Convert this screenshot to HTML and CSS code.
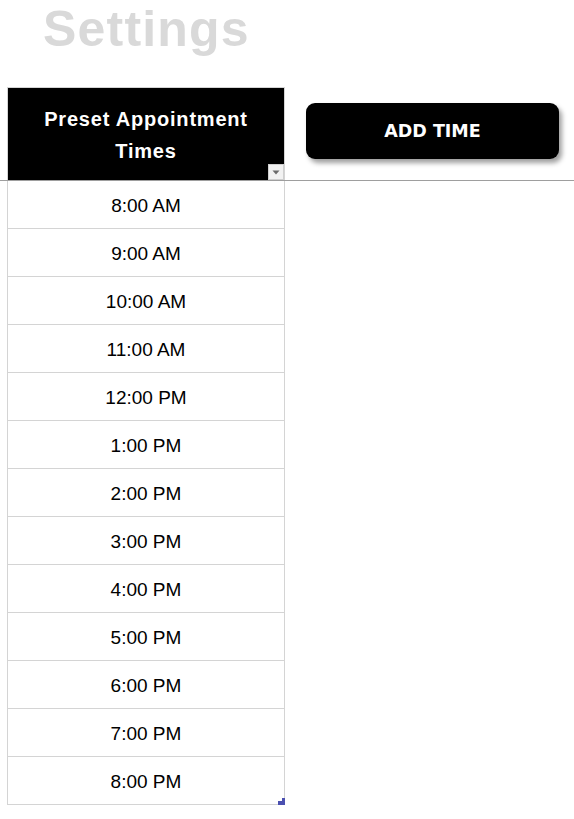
FILE: index.html
```html
<!DOCTYPE html>
<html>
<head>
<meta charset="utf-8">
<link rel="stylesheet" href="styles.css">
</head>
<body>
<div class="title">Settings</div>
<div class="top">
  <div class="head">
    <div class="head-text">Preset Appointment<br>Times</div>
    <div class="filter"><svg width="8" height="5" viewBox="0 0 8 5"><path d="M0.5 0.5 H7.5 L4 4.5 Z" fill="#6b6b6b"/></svg></div>
  </div>
  <div class="btn">ADD TIME</div>
</div>
<div class="freeze"></div>
<div class="table">
  <div class="row">8:00 AM</div>
  <div class="row">9:00 AM</div>
  <div class="row">10:00 AM</div>
  <div class="row">11:00 AM</div>
  <div class="row">12:00 PM</div>
  <div class="row">1:00 PM</div>
  <div class="row">2:00 PM</div>
  <div class="row">3:00 PM</div>
  <div class="row">4:00 PM</div>
  <div class="row">5:00 PM</div>
  <div class="row">6:00 PM</div>
  <div class="row">7:00 PM</div>
  <div class="row">8:00 PM</div>
  <svg class="handle" width="7" height="7" viewBox="0 0 7 7"><path d="M4 0 H7 V7 H0 V3 H4 Z" fill="#4b50b0"/></svg>
</div>
</body>
</html>
```

FILE: styles.css
```css
html, body {
  margin: 0;
  padding: 0;
  background: #ffffff;
}
body {
  font-family: "Liberation Sans", Arial, sans-serif;
  width: 574px;
  height: 819px;
  overflow: hidden;
}
.title {
  height: 87px;
  box-sizing: border-box;
  padding-left: 43px;
  padding-top: 1px;
  font-size: 50px;
  line-height: 56px;
  font-weight: bold;
  letter-spacing: 1.2px;
  color: #d9d9d9;
}
.top {
  display: flex;
  align-items: flex-start;
  height: 93px;
}
.head {
  position: relative;
  margin-left: 7px;
  width: 278px;
  height: 93px;
  box-sizing: border-box;
  border: 1px solid #d4d4d4;
  border-bottom: none;
  background: #000000;
  background-clip: content-box;
  display: flex;
  align-items: center;
  justify-content: center;
}
.head-text {
  color: #ffffff;
  font-weight: bold;
  font-size: 20px;
  letter-spacing: 0.8px;
  line-height: 32px;
  text-align: center;
  padding-top: 2px;
}
.filter {
  position: absolute;
  right: 0;
  bottom: 0;
  width: 16px;
  height: 16px;
  box-sizing: border-box;
  background: #f2f2f2;
  border: 1px solid #cfcfcf;
  display: flex;
  align-items: center;
  justify-content: center;
}
.btn {
  margin-left: 21px;
  margin-top: 16px;
  width: 253px;
  height: 56px;
  background: #000000;
  border-radius: 9px;
  box-shadow: 3px 4px 5px rgba(0, 0, 0, 0.38);
  color: #ffffff;
  font-family: "DejaVu Sans", sans-serif;
  font-weight: bold;
  font-size: 17.5px;
  display: flex;
  align-items: center;
  justify-content: center;
  padding-bottom: 1px;
  box-sizing: border-box;
}
.freeze {
  height: 1px;
  background: #9e9e9e;
}
.table {
  position: relative;
  margin-left: 7px;
  width: 278px;
  box-sizing: border-box;
  border-left: 1px solid #d4d4d4;
  border-right: 1px solid #d4d4d4;
}
.row {
  height: 48px;
  box-sizing: border-box;
  border-bottom: 1px solid #d4d4d4;
  padding-top: 2px;
  display: flex;
  align-items: center;
  justify-content: center;
  font-size: 19px;
  color: #000000;
}
.handle {
  position: absolute;
  right: -1px;
  bottom: 0;
  display: block;
}
```
